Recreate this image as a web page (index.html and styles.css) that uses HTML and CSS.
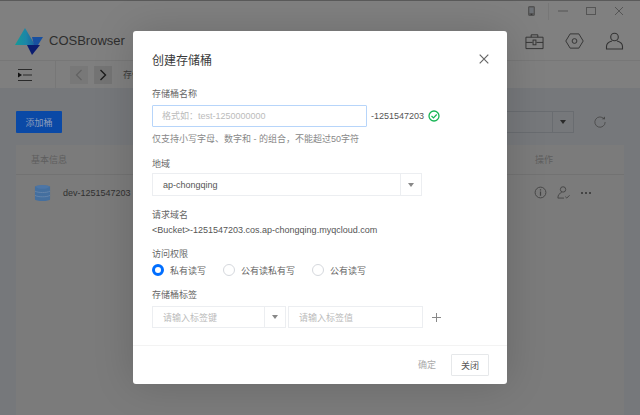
FILE: index.html
```html
<!DOCTYPE html>
<html lang="zh">
<head>
<meta charset="utf-8">
<title>COSBrowser</title>
<link rel="stylesheet" href="styles.css">
</head>
<body>
<div class="app">
  <div class="titlebar">
    <svg class="tb-icon phone" viewBox="0 0 8 12"><rect x="0.5" y="0.5" width="7" height="11" rx="1" fill="#5a5a5a" stroke="#4a4a4a"/><rect x="1.500" y="2" width="5" height="6.500" fill="#6c7075"/><rect x="3" y="9.300" width="2" height="1.200" fill="#2c2c2c"/></svg>
    <span class="tb-sep"></span>
    <svg class="tb-icon win" viewBox="0 0 10 10"><path d="M0 5h10" stroke="#555" fill="none"/></svg>
    <svg class="tb-icon win" viewBox="0 0 10 10"><rect x=".5" y="1.500" width="9" height="7" stroke="#555" fill="none"/></svg>
    <svg class="tb-icon win" viewBox="0 0 10 10"><path d="M1 1l8 8M9 1l-8 8" stroke="#555" fill="none"/></svg>
  </div>
  <header class="header">
    <div class="brand">
      <svg class="logo" viewBox="0 0 29 28">
        <defs><linearGradient id="lg" x1="0" y1="0" x2="1" y2="0"><stop offset="0" stop-color="#179a96"/><stop offset=".55" stop-color="#1b86a8"/><stop offset="1" stop-color="#1c5f9c"/></linearGradient></defs>
        <path d="M10 1 0 18h20z" fill="url(#lg)"/>
        <path d="M17 10h11l-5 8h-4z" fill="#174fa0"/>
        <path d="M12 18h13l-8 10z" fill="#0a1c70"/>
      </svg>
      <span class="brand-name">COSBrowser</span>
    </div>
    <div class="tools">
      <svg class="tool" viewBox="0 0 20 18" fill="none" stroke="#333"><path d="M1 5h18v12H1zM6.500 5V2.500h7V5M1 10.500h7M12 10.500h7"/><rect x="8.500" y="8" width="3" height="5"/></svg>
      <svg class="tool" viewBox="0 0 24 20" fill="none" stroke="#333" stroke-width="1.200"><path d="M1 10 6.500 1h11L23 10l-5.500 9h-11z"/><circle cx="12" cy="10" r="3"/></svg>
      <svg class="tool" viewBox="0 0 18 18" fill="none" stroke="#333" stroke-width="1.100"><circle cx="9" cy="5" r="3.800"/><path d="M6.500 9C3 10 1 12 1 14.500V17h16v-2.500C17 12 15 10 11.500 9"/></svg>
    </div>
  </header>
  <nav class="toolbar">
    <div class="menu-cell">
      <svg class="menu-icon" viewBox="0 0 14 12"><path d="M0 .5h14M5 6h9M0 11.500h14" stroke="#2a2a2a" fill="none"/><path d="M0 3.500l4 2.500-4 2.500z" fill="#111"/></svg>
    </div>
    <span class="nav-btn disabled"><svg viewBox="0 0 8 12"><path d="M6.500 1 1.500 6l5 5" stroke="#626262" fill="none" stroke-width="1.200"/></svg></span>
    <span class="nav-btn"><svg viewBox="0 0 8 12"><path d="M1.500 1l5 5-5 5" stroke="#1c1c1c" fill="none" stroke-width="1.400"/></svg></span>
    <span class="crumb">存储桶列表</span>
  </nav>
  <main class="content">
    <div class="actions">
      <button class="add-btn">添加桶</button>
      <div class="filter">
        <span class="filter-box"><span class="filter-arrow"><i class="caret"></i></span></span>
        <svg class="refresh" viewBox="0 0 14 14" fill="none" stroke="#484848"><path d="M11.800 3.500A6 6 0 1 0 13 7"/><path d="M9 3.800h3.800V.5" fill="#484848" stroke="none"/></svg>
      </div>
    </div>
    <section class="table">
      <div class="thead"><span>基本信息</span><span>操作</span></div>
      <div class="row">
        <svg class="db" viewBox="0 0 18 20"><path d="M1 3.500C1 1.500 17 1.500 17 3.500V16.500C17 19 1 19 1 16.500z" fill="#446f9f"/><path d="M1 8c3 2 13 2 16 0M1 12.500c3 2 13 2 16 0" stroke="#6585ab" fill="none"/><ellipse cx="9" cy="3.500" rx="7" ry="2" fill="#4d76a6"/></svg>
        <span class="row-name">dev-1251547203</span>
        <span class="row-ops">
          <svg viewBox="0 0 14 14" fill="none" stroke="#444"><circle cx="7" cy="7" r="5.800"/><path d="M7 6v4.500M7 3.500v1.300" stroke-width="1.300"/></svg>
          <svg viewBox="0 0 14 14" fill="none" stroke="#444"><circle cx="6.500" cy="3.700" r="2.900"/><path d="M5 7C2.500 8 1 9.500 1 13h6.500M9 11.500l1.500 1.500L13.500 10"/></svg>
          <svg class="dots" viewBox="0 0 12 4"><path d="M1 1h2v2H1zM5 1h2v2H5zM9 1h2v2H9z" fill="#444"/></svg>
        </span>
      </div>
    </section>
  </main>
</div>

<div class="overlay">
  <div class="dialog">
    <div class="dlg-head">
      <h2 class="dlg-title">创建存储桶</h2>
      <svg class="close" viewBox="0 0 10 10"><path d="M.7.7l8.600 8.600M9.300.7.700 9.300" stroke="#666" stroke-width="1.200" fill="none"/></svg>
    </div>
    <div class="dlg-body">
      <div class="field name-field">
        <label class="label">存储桶名称</label>
        <div class="name-row">
          <input class="input name-input" placeholder="格式如&#xFF1A;test-1250000000">
          <span class="suffix">-1251547203</span>
          <svg class="ok" viewBox="0 0 12 12" fill="none" stroke="#17b555"><circle cx="6" cy="6" r="5" stroke-width="1.300"/><path d="M3.500 6l2 2L8.700 4.500" stroke-width="1.200"/></svg>
        </div>
        <p class="hint">仅支持小写字母、数字和 - 的组合&#xFF0C;不能超过50字符</p>
      </div>
      <div class="field region-field">
        <label class="label">地域</label>
        <div class="select region"><span class="select-value">ap-chongqing</span><span class="select-arrow"><i class="caret light"></i></span></div>
      </div>
      <div class="field domain-field">
        <label class="label">请求域名</label>
        <p class="domain">&lt;Bucket&gt;-1251547203.cos.ap-chongqing.myqcloud.com</p>
      </div>
      <div class="field access-field">
        <label class="label">访问权限</label>
        <div class="radios">
          <span class="radio on"><i></i>私有读写</span>
          <span class="radio"><i></i>公有读私有写</span>
          <span class="radio"><i></i>公有读写</span>
        </div>
      </div>
      <div class="field tag-field">
        <label class="label">存储桶标签</label>
        <div class="tag-row">
          <div class="select tag-key"><span class="select-value ph">请输入标签键</span><span class="select-arrow"><i class="caret light"></i></span></div>
          <div class="select tag-value"><span class="select-value ph">请输入标签值</span></div>
          <svg class="plus" viewBox="0 0 9 9"><path d="M4.500 0v9M0 4.500h9" stroke="#888" fill="none"/></svg>
        </div>
      </div>
    </div>
    <div class="dlg-foot">
      <span class="confirm">确定</span>
      <button class="close-btn">关闭</button>
    </div>
  </div>
</div>
</body>
</html>
```
FILE: styles.css
```css
* { box-sizing: border-box; }
html, body { margin: 0; height: 100%; overflow: hidden; }
body {
  font-family: "Liberation Sans", "Noto Sans CJK SC", sans-serif;
  font-size: 9px;
  color: #555;
  background: #808080;
}
p, h2 { margin: 0; font-weight: normal; }
i { font-style: normal; display: block; }

.app { height: 415px; display: flex; flex-direction: column; border-top: 1px solid #5a5a5a; }

.titlebar { height: 20px; display: flex; align-items: center; justify-content: flex-end; padding-right: 16px; background: #808080; }
.tb-icon { display: block; }
.phone { width: 7px; height: 10px; margin-right: 13px; }
.tb-sep { width: 1px; height: 17px; background: #777; margin-right: 9px; }
.win { width: 10px; height: 10px; margin-left: 18px; }
.tb-sep + .win { margin-left: 0; }

.header { height: 40px; display: flex; align-items: center; justify-content: space-between; background: #808080; border-bottom: 1px solid #777; padding: 0 16px 0 15px; }
.brand { display: flex; align-items: center; gap: 5px; }
.logo { width: 29px; height: 28px; display: block; }
.brand-name { font-size: 13px; color: #2e2e2e; letter-spacing: 0; }
.tools { display: flex; align-items: center; gap: 21px; }
.tool { display: block; width: 19px; height: 18px; }

.toolbar { height: 27px; display: flex; align-items: center; background: #7f7f7f; }
.menu-cell { width: 56px; height: 100%; display: flex; align-items: center; padding-left: 18px; border-right: 1px solid #777; }
.menu-icon { width: 14px; height: 12px; display: block; }
.nav-btn { width: 18px; height: 18px; margin-left: 14px; display: flex; align-items: center; justify-content: center; background: #747474; }
.nav-btn.disabled { background: #787878; }
.nav-btn + .nav-btn { margin-left: 6px; }
.nav-btn svg { width: 8px; height: 12px; }
.crumb { margin-left: 11px; color: #3a3a3a; white-space: nowrap; }

.content { flex: 1; background: #76787b; padding: 23px 16px 0; display: flex; flex-direction: column; }
.actions { display: flex; justify-content: space-between; align-items: flex-start; }
.add-btn { width: 46px; height: 22px; border: 0; border-radius: 1px; background: #0a49a6; color: #8b9cba; font: inherit; padding: 0; }
.filter { display: flex; align-items: center; gap: 20px; padding-right: 18px; }
.filter-box { width: 200px; height: 22px; border: 1px solid #696c70; display: flex; justify-content: flex-end; }
.filter-arrow { width: 21px; border-left: 1px solid #696c70; display: flex; align-items: center; justify-content: center; }
.refresh { width: 12px; height: 12px; display: block; }
.caret { width: 0; height: 0; border: 3.500px solid transparent; border-top: 4px solid #2a2a2a; border-bottom: 0; }
.caret.light { border-top-color: #888; }

.table { background: #7b7b7b; margin-top: 12px; flex: 1; }
.thead { height: 30px; display: flex; justify-content: space-between; align-items: center; padding: 0 71px 0 15px; border-bottom: 1px solid #727272; color: #5e5e5e; }
.row { display: flex; align-items: center; height: 35px; padding-left: 18px; }
.db { width: 17px; height: 20px; display: block; }
.row-name { margin-left: 12px; color: #303030; }
.row-ops { margin-left: auto; display: flex; align-items: center; gap: 10px; padding-right: 32px; }
.row-ops svg { width: 13px; height: 13px; display: block; }
.row-ops .dots { width: 12px; height: 4px; }

.overlay { position: absolute; inset: 0; display: flex; align-items: center; justify-content: center; }
.dialog { width: 374px; height: 353px; background: #fff; border-radius: 3px; display: flex; flex-direction: column; box-shadow: 0 0 40px rgba(0,0,0,.16); }
.dlg-head { height: 56px; padding: 0 18px 0 19px; display: flex; align-items: center; justify-content: space-between; }
.dlg-title { font-size: 12px; color: #3a3a3a; }
.close { width: 10px; height: 10px; display: block; }
.dlg-body { flex: 1; padding: 0 19px; display: flex; flex-direction: column; }
.field { display: flex; flex-direction: column; }
.label { display: block; font-size: 9px; line-height: 12px; color: #666; }
.name-field .label, .region-field .label, .domain-field .label { line-height: 14px; }
.name-row { display: flex; align-items: center; margin-top: 4px; }
.input { width: 215px; height: 22px; border: 1px solid #b7d5fa; border-radius: 1px; padding: 0 9px; font: inherit; outline: 0; }
.input::placeholder { color: #bbb; opacity: 1; }
.suffix { margin-left: 4px; color: #555; }
.ok { width: 12px; height: 12px; margin-left: 4px; display: block; }
.hint { margin-top: 6px; line-height: 12px; color: #888; }
.region-field { margin-top: 12px; }
.select { display: flex; height: 23px; border: 1px solid #eceef1; align-items: stretch; }
.region { margin-top: 2px; width: 270px; }
.select-value { flex: 1; padding-left: 10px; display: flex; align-items: center; color: #555; }
.select-value.ph { color: #bbb; }
.select-arrow { width: 21px; border-left: 1px solid #eceef1; display: flex; align-items: center; justify-content: center; }
.domain-field { margin-top: 12px; }
.domain { margin-top: 2px; line-height: 12px; color: #555; }
.access-field { margin-top: 12px; }
.radios { display: flex; margin-top: 4px; height: 12px; align-items: center; }
.radio { display: flex; align-items: center; gap: 6px; margin-right: 17px; color: #666; }
.radio i { width: 12px; height: 12px; border: 1px solid #d5d8dd; border-radius: 50%; background: #fff; }
.radio.on i { border: 3.500px solid #006eff; }
.tag-field { margin-top: 13px; }
.tag-row { display: flex; align-items: center; margin-top: 5px; gap: 2px; }
.tag-row .select { height: 22px; }
.tag-key { width: 134px; }
.tag-value { width: 135px; }
.plus { margin-left: 7px; width: 9px; height: 9px; display: block; }
.dlg-foot { height: 39px; border-top: 1px solid #f3f3f3; display: flex; align-items: flex-start; justify-content: flex-end; padding: 8px 18px 0 0; gap: 15px; }
.confirm { color: #aaa; line-height: 22px; }
.close-btn { width: 38px; height: 22px; background: #fff; border: 1px solid #e6e8ea; border-radius: 1px; font: inherit; color: #555; padding: 0; }
```
